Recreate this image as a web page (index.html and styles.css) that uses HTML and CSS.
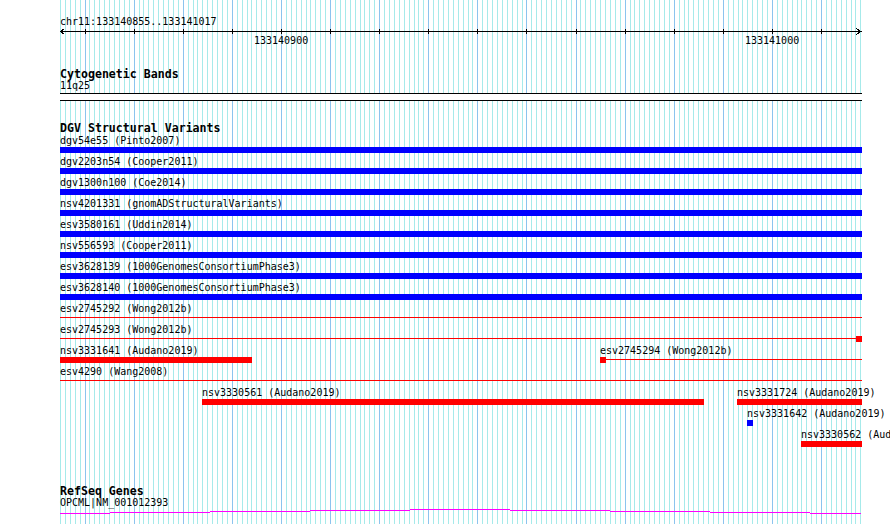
FILE: index.html
```html
<!DOCTYPE html>
<html lang="en">
<head>
    <meta charset="UTF-8">
    <title>chr11:133140855..133141017</title>
    <link rel="stylesheet" href="styles.css">
</head>
<body>

<div class="browser">
    <div class="grid" id="grid"></div>

    <div class="ruler">
        <div class="region">chr11:133140855..133141017</div>
        <svg class="axis" width="802" height="7" shape-rendering="crispEdges">
            <g stroke="#000" stroke-width="1" fill="none">
                <line x1="0" y1="3.5" x2="802" y2="3.5"/>
                <polyline points="4.5,0.5 0.5,3.5 4.5,6.5"/>
                <polyline points="796.5,0.5 800.5,3.5 796.5,6.5"/>
                <path d="M25.5 1V6M74.5 1V6M123.5 1V6M172.5 1V6M221.5 1V6M270.5 1V6M319.5 1V6M368.5 1V6M417.5 1V6M466.5 1V6M516.5 1V6M565.5 1V6M614.5 1V6M663.5 1V6M712.5 1V6M761.5 1V6"/>
            </g>
        </svg>
        <div class="ticks">
            <span class="tick-label" style="left:194px">133140900</span>
            <span class="tick-label" style="left:685px">133141000</span>
        </div>
    </div>

    <section class="track cyto">
        <h2 class="track-title">Cytogenetic Bands</h2>
        <div class="name">11q25</div>
        <div class="band"></div>
    </section>

    <section class="track dgv">
        <h2 class="track-title">DGV Structural Variants</h2>

        <div class="row">
            <div class="feature" style="left:0;width:802px">
                <div class="name">dgv54e55 (Pinto2007)</div>
                <div class="bar blue"></div>
            </div>
        </div>
        <div class="row">
            <div class="feature" style="left:0;width:802px">
                <div class="name">dgv2203n54 (Cooper2011)</div>
                <div class="bar blue"></div>
            </div>
        </div>
        <div class="row">
            <div class="feature" style="left:0;width:802px">
                <div class="name">dgv1300n100 (Coe2014)</div>
                <div class="bar blue"></div>
            </div>
        </div>
        <div class="row">
            <div class="feature" style="left:0;width:802px">
                <div class="name">nsv4201331 (gnomADStructuralVariants)</div>
                <div class="bar blue"></div>
            </div>
        </div>
        <div class="row">
            <div class="feature" style="left:0;width:802px">
                <div class="name">esv3580161 (Uddin2014)</div>
                <div class="bar blue"></div>
            </div>
        </div>
        <div class="row">
            <div class="feature" style="left:0;width:802px">
                <div class="name">nsv556593 (Cooper2011)</div>
                <div class="bar blue"></div>
            </div>
        </div>
        <div class="row">
            <div class="feature" style="left:0;width:802px">
                <div class="name">esv3628139 (1000GenomesConsortiumPhase3)</div>
                <div class="bar blue"></div>
            </div>
        </div>
        <div class="row">
            <div class="feature" style="left:0;width:802px">
                <div class="name">esv3628140 (1000GenomesConsortiumPhase3)</div>
                <div class="bar blue"></div>
            </div>
        </div>

        <div class="row">
            <div class="feature" style="left:0;width:802px">
                <div class="name">esv2745292 (Wong2012b)</div>
                <div class="glyph"><span class="line"></span></div>
            </div>
        </div>
        <div class="row">
            <div class="feature" style="left:0;width:802px">
                <div class="name">esv2745293 (Wong2012b)</div>
                <div class="glyph"><span class="line"></span><span class="square red"></span></div>
            </div>
        </div>
        <div class="row">
            <div class="feature" style="left:0;width:192px">
                <div class="name">nsv3331641 (Audano2019)</div>
                <div class="bar red"></div>
            </div>
            <div class="feature" style="left:540px;width:262px">
                <div class="name">esv2745294 (Wong2012b)</div>
                <div class="glyph"><span class="square red"></span><span class="line"></span></div>
            </div>
        </div>
        <div class="row">
            <div class="feature" style="left:0;width:802px">
                <div class="name">esv4290 (Wang2008)</div>
                <div class="glyph"><span class="line"></span></div>
            </div>
        </div>
        <div class="row">
            <div class="feature" style="left:142px;width:502px">
                <div class="name">nsv3330561 (Audano2019)</div>
                <div class="bar red"></div>
            </div>
            <div class="feature" style="left:677px;width:125px">
                <div class="name">nsv3331724 (Audano2019)</div>
                <div class="bar red"></div>
            </div>
        </div>
        <div class="row">
            <div class="feature" style="left:687px;width:6px">
                <div class="name">nsv3331642 (Audano2019)</div>
                <div class="bar blue"></div>
            </div>
        </div>
        <div class="row">
            <div class="feature" style="left:741px;width:61px">
                <div class="name">nsv3330562 (Audano2019)</div>
                <div class="bar red"></div>
            </div>
        </div>
    </section>

    <section class="track refseq">
        <h2 class="track-title">RefSeq Genes</h2>
        <div class="name">OPCML|NM_001012393</div>
        <svg class="transcript" width="802" height="6" shape-rendering="crispEdges">
            <path d="M0 5.5H50M50 4.5H150M150 3.5H250M250 2.5H350M350 1.5H450M450 2.5H550M550 3.5H650M650 4.5H750M750 5.5H801" stroke="#ff00ff" stroke-width="1" fill="none"/>
        </svg>
    </section>
</div>

<script>
    // grid: one line per base, darker every 10 bp
    const grid = document.getElementById('grid');
    for (let i = 0; i <= 163; i++) {
        const line = document.createElement('div');
        line.className = (855 + i) % 10 === 0 ? 'gridline major' : 'gridline';
        line.style.left = Math.round(60 + i * 4.91) + 'px';
        grid.appendChild(line);
    }
</script>

</body>
</html>
```

FILE: styles.css
```css
body {
    margin: 0;
    overflow: hidden;
    background: #fff;
    color: #000;
    font-family: "DejaVu Sans Mono", "Liberation Mono", monospace;
    font-size: 10px;
    line-height: 12px;
}
.browser {
    position: relative;
    z-index: 0;
    width: 890px;
    height: 524px;
}
.grid {
    position: absolute;
    top: 0;
    left: 0;
    right: 0;
    bottom: 0;
    z-index: -1;
}
.gridline {
    position: absolute;
    top: 0;
    bottom: 0;
    width: 1px;
    background: #a6eaea;
}
.gridline.major {
    background: #8cc4ee;
}
.ruler {
    padding: 16px 0 0 60px;
}
.region {
    height: 12px;
}
.axis {
    display: block;
}
.ticks {
    position: relative;
    height: 12px;
}
.tick-label {
    position: absolute;
    top: 0;
}
.track {
    padding-left: 60px;
}
.track-title {
    height: 13px;
    margin: 0;
    font-size: 11.6px;
    font-weight: bold;
    line-height: 15px;
}
.name {
    height: 12px;
    white-space: nowrap;
}
.cyto {
    margin-top: 20px;
}
.band {
    width: 802px;
    height: 6px;
    margin-top: 1px;
    border-top: 1px solid #000;
    border-bottom: 1px solid #000;
    background: #fff;
}
.dgv {
    margin-top: 20px;
}
.row {
    position: relative;
    width: 802px;
    height: 21px;
}
.feature {
    position: absolute;
    top: 0;
}
.feature .name {
    height: 13px;
    line-height: 14px;
}
.bar {
    height: 6px;
}
.blue {
    background: #0000ff;
}
.red {
    background: #ff0000;
}
.glyph {
    display: flex;
    height: 6px;
}
.line {
    flex: 1;
    height: 1px;
    margin-top: 2px;
    background: #ff0000;
}
.square {
    width: 6px;
    height: 6px;
}
.refseq {
    margin-top: 35px;
}
.transcript {
    display: block;
    margin-top: -1px;
}
```
